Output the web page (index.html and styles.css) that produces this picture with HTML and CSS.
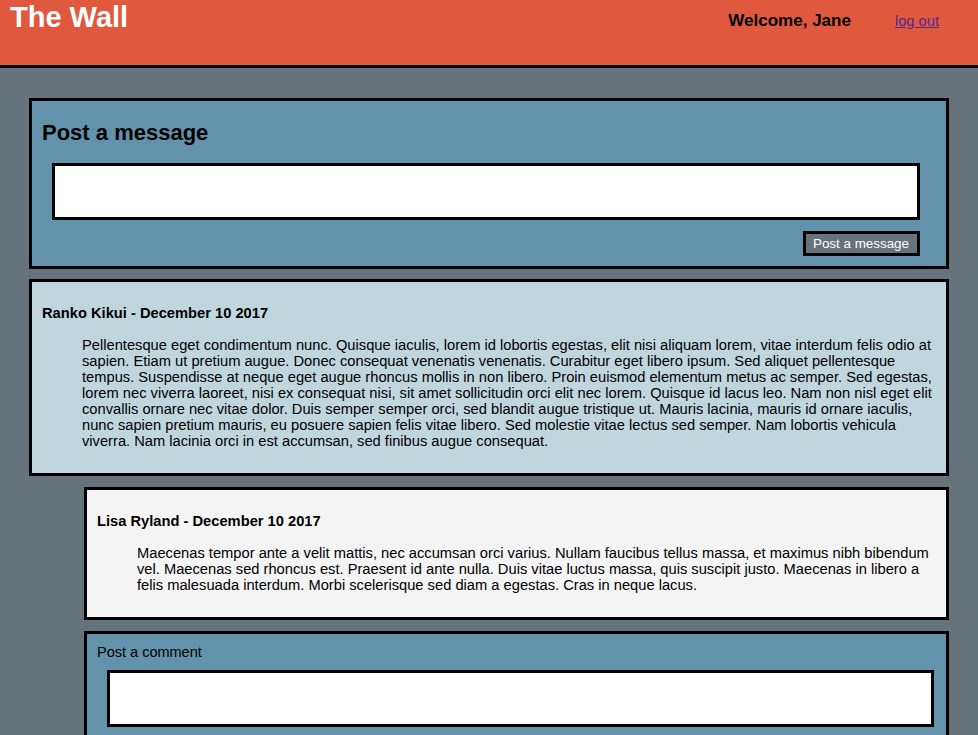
FILE: index.html
```html
<!DOCTYPE html>
<html lang="en">
<head>
<meta charset="utf-8">
<title>The Wall</title>
<link rel="stylesheet" href="styles.css">
</head>
<body>
<header class="topbar">
  <h1 class="brand">The Wall</h1>
  <div class="user">
    <span class="welcome">Welcome, Jane</span>
    <a class="logout" href="#">log out</a>
  </div>
</header>
<main class="wall">
  <form class="composer">
    <h2 class="composer-title">Post a message</h2>
    <textarea class="composer-input"></textarea>
    <div class="composer-actions">
      <button type="button" class="btn">Post a message</button>
    </div>
  </form>

  <article class="message">
    <h4 class="author">Ranko Kikui - December 10 2017</h4>
    <p class="body">Pellentesque eget condimentum nunc. Quisque iaculis, lorem id lobortis egestas, elit nisi aliquam lorem, vitae interdum felis odio at sapien. Etiam ut pretium augue. Donec consequat venenatis venenatis. Curabitur eget libero ipsum. Sed aliquet pellentesque tempus. Suspendisse at neque eget augue rhoncus mollis in non libero. Proin euismod elementum metus ac semper. Sed egestas, lorem nec viverra laoreet, nisi ex consequat nisi, sit amet sollicitudin orci elit nec lorem. Quisque id lacus leo. Nam non nisl eget elit convallis ornare nec vitae dolor. Duis semper semper orci, sed blandit augue tristique ut. Mauris lacinia, mauris id ornare iaculis, nunc sapien pretium mauris, eu posuere sapien felis vitae libero. Sed molestie vitae lectus sed semper. Nam lobortis vehicula viverra. Nam lacinia orci in est accumsan, sed finibus augue consequat.</p>
  </article>

  <div class="comments">
    <article class="comment">
      <h4 class="author">Lisa Ryland - December 10 2017</h4>
      <p class="body">Maecenas tempor ante a velit mattis, nec accumsan orci varius. Nullam faucibus tellus massa, et maximus nibh bibendum vel. Maecenas sed rhoncus est. Praesent id ante nulla. Duis vitae luctus massa, quis suscipit justo. Maecenas in libero a felis malesuada interdum. Morbi scelerisque sed diam a egestas. Cras in neque lacus.</p>
    </article>
    <form class="comment-form">
      <label class="comment-label">Post a comment</label>
      <textarea class="comment-input"></textarea>
    </form>
  </div>
</main>
</body>
</html>
```

FILE: styles.css
```css
* { box-sizing: border-box; }

html, body {
  margin: 0;
  padding: 0;
}

body {
  background: #66737b;
  font-family: "Liberation Sans", Arial, Helvetica, sans-serif;
  color: #000;
  min-height: 735px;
}

.topbar {
  height: 68px;
  background: #e0583e;
  border-bottom: 3px solid #000;
  display: flex;
  justify-content: space-between;
  align-items: flex-start;
  padding: 0 39px 0 10px;
}

.brand {
  margin: 1px 0 0;
  font-size: 29px;
  line-height: 33px;
  font-weight: bold;
  color: #fff;
}

.user {
  display: flex;
  align-items: baseline;
  gap: 44px;
  margin-top: 11px;
}

.welcome {
  font-size: 17px;
  font-weight: bold;
  line-height: 20px;
}

.logout {
  font-size: 14.7px;
  color: #55298f;
  text-decoration: underline;
}

.wall {
  padding: 30px 29px;
}

.composer {
  margin: 0;
  background: #6393aa;
  border: 3px solid #000;
  padding: 10px;
}

.composer-title {
  margin: 9px 0 18px;
  font-size: 22px;
  line-height: 25px;
  font-weight: bold;
}

.composer-input,
.comment-input {
  display: block;
  height: 57px;
  border: 3px solid #000;
  background: #fff;
  resize: none;
  padding: 2px;
  font: inherit;
}

.composer-input {
  width: calc(100% - 26px);
  margin: 0 16px 0 10px;
}

.composer-actions {
  display: flex;
  justify-content: flex-end;
  margin: 11px 16px 0 0;
}

.btn {
  height: 25px;
  border: 3px solid #000;
  background: #66737b;
  color: #fff;
  font-family: "Liberation Sans", Arial, Helvetica, sans-serif;
  font-size: 13.4px;
  line-height: 17px;
  padding: 0 8px 0 7px;
  cursor: pointer;
}

.message,
.comment {
  margin-top: 10px;
  border: 3px solid #000;
  padding: 10px;
}

.message {
  background: #c0d6dd;
}

.author {
  margin: 13px 0 0;
  font-size: 14.7px;
  line-height: 16px;
  font-weight: bold;
}

.body {
  margin: 16px 0 14px 40px;
  font-size: 14.7px;
  line-height: 16px;
}

.comments {
  margin-left: 55px;
  margin-top: 11px;
}

.comment {
  margin-top: 0;
  background: #f4f4f4;
}

.comment-form {
  margin-top: 11px;
  background: #6393aa;
  border: 3px solid #000;
  padding: 10px;
}

.comment-label {
  display: block;
  font-size: 14.5px;
  line-height: 16px;
}

.comment-input {
  width: calc(100% - 12px);
  margin: 10px 2px 0 10px;
}
```
